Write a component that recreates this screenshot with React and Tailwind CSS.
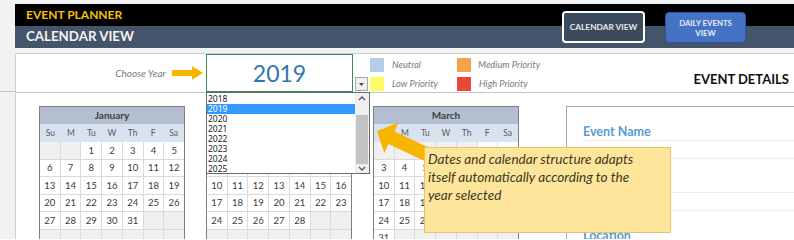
import React from "react";

const DAYS = ["Su", "M", "Tu", "W", "Th", "F", "Sa"];
const YEARS = [2018, 2019, 2020, 2021, 2022, 2023, 2024, 2025];

function MonthCalendar({ name, offset, days }) {
  const cells = Array.from({ length: 42 }, (_, i) => {
    const d = i - offset + 1;
    return d >= 1 && d <= days ? d : null;
  });
  return (
    <div className="w-[146px] shrink-0 border border-[#7f7f7f] bg-[#dadada]">
      <div className="h-[17px] bg-[#b3bfd0] flex items-center justify-center text-[10px] font-bold text-[#3f3f3f]">
        {name}
      </div>
      <div className="grid grid-cols-7 h-[18px] bg-[#d9e2ef] items-center text-center text-[8.5px] text-[#5a5a5a]">
        {DAYS.map(d => <span key={d}>{d}</span>)}
      </div>
      <div className="grid grid-cols-7 gap-px">
        {cells.map((d, i) => (
          <div key={i}
            className={`h-[16.5px] flex items-center justify-center text-[9.5px] leading-none text-[#3a3a3a] ${d ? "bg-white" : "bg-[#f0f0f0]"}`}>
            {d}
          </div>
        ))}
      </div>
    </div>
  );
}

function Chevron({ up }) {
  return (
    <svg width="8" height="6" viewBox="0 0 8 6">
      <path d={up ? "M1 5 L4 2 L7 5" : "M1 1 L4 4 L7 1"} fill="none" stroke="#555" strokeWidth="1.3" />
    </svg>
  );
}

export default function App() {
  return (
    <div className="relative w-[794px] h-[239px] overflow-hidden bg-[#f2f2f2] font-['Lato',sans-serif]">
      {/* Title bars */}
      <div className="pl-[15px] pt-[4px]">
        <div className="relative">
          <div className="h-[22px] bg-black flex items-center pl-[11px] text-[12px] font-bold text-[#f5c000]">
            EVENT PLANNER
          </div>
          <div className="h-[22px] bg-[#44546a] flex items-center pl-[11px] text-[13.3px] font-bold text-[#f4f4f4]">
            CALENDAR VIEW
          </div>

          {/* nav buttons */}
          <div className="absolute left-[547px] top-[7px] flex gap-[20px]">
            <div className="w-[83px] h-[32px] rounded-[4px] border-2 border-white bg-[#3c4a5e] flex items-center justify-center text-[8.3px] font-bold text-[#e8e8e8]">
              CALENDAR VIEW
            </div>
            <div className="mt-[1px] w-[81px] h-[31px] rounded-[4px] bg-[#4472c4] border border-[#2f5597] flex flex-col items-center justify-center text-[7.8px] font-bold leading-[10px] text-[#e6ecf7]">
              <span>DAILY EVENTS</span>
              <span>VIEW</span>
            </div>
          </div>
        </div>
      </div>

      <div className="mt-[5px] flex">
        {/* left gutter */}
        <div className="w-[15px] shrink-0">
          <div className="h-[39px] border-b border-[#c6c6c6]" />
        </div>

        {/* sheet */}
        <div className="flex-1 bg-white border-l border-t border-[#cfcfcf]">
          {/* year / legend row */}
          <div className="h-[39px] flex border-b border-[#c6c6c6]">
            <div className="w-[150px] flex items-center justify-end text-[10px] italic text-[#7a7a7a]">
              Choose Year
            </div>
            <svg className="ml-[6px] self-center" width="31" height="14" viewBox="0 0 31 14">
              <polygon points="0,4 20,4 20,0 31,7 20,14 20,10 0,10" fill="#f7b500" />
            </svg>
            <div className="ml-[3px] w-[147px] border border-[#3f8a50] flex items-center justify-center text-[23px] text-[#2e75b6]">
              2019
            </div>
            <div className="ml-[2px] mt-[23px] w-[13px] h-[14px] border border-[#a6a6a6] bg-[#f0f0f0] flex items-center justify-center">
              <svg width="5" height="3" viewBox="0 0 5 3"><polygon points="0,0 5,0 2.5,3" fill="#444" /></svg>
            </div>

            {/* legend */}
            <div className="ml-[2px] pt-[4px] flex flex-col gap-[5px] w-[87px]">
              <div className="flex items-center gap-[8px]">
                <div className="w-[14px] h-[14px] bg-[#b4cde8]" />
                <span className="text-[9.3px] italic text-[#7a7a7a]">Neutral</span>
              </div>
              <div className="flex items-center gap-[8px]">
                <div className="w-[14px] h-[14px] bg-[#fdfb6a]" />
                <span className="text-[9.3px] italic text-[#7a7a7a]">Low Priority</span>
              </div>
            </div>
            <div className="pt-[4px] flex flex-col gap-[5px]">
              <div className="flex items-center gap-[7px]">
                <div className="w-[14px] h-[14px] bg-[#f6a24c]" />
                <span className="text-[9.3px] italic text-[#7a7a7a]">Medium Priority</span>
              </div>
              <div className="flex items-center gap-[8px]">
                <div className="w-[14px] h-[14px] bg-[#e64a3b]" />
                <span className="text-[9.3px] italic text-[#7a7a7a]">High Priority</span>
              </div>
            </div>

            <div className="ml-auto pr-[5px] pb-[3px] self-end text-[13px] font-bold text-[#111]">
              EVENT DETAILS
            </div>
          </div>

          {/* calendars + event form */}
          <div className="pt-[13px] pl-[23px] flex">
            <MonthCalendar name="January" offset={2} days={31} />
            <div className="ml-[21px]"><MonthCalendar name="February" offset={5} days={28} /></div>
            <div className="ml-[21px]"><MonthCalendar name="March" offset={5} days={31} /></div>

            <div className="ml-[47px] flex-1 border-l border-t border-[#a6a6a6] pl-[16px]">
              <div className="h-[34px] flex items-end pb-[1px] border-b border-[#ececec] text-[12.5px] leading-[14px] font-bold text-[#5b9bd5]">
                Event Name
              </div>
              <div className="h-[18px] border-b border-[#ececec]" />
              <div className="h-[17px]" />
              <div className="h-[17px] border-b border-[#ececec]" />
              <div className="h-[18px] border-b border-[#ececec]" />
              <div className="h-[18px]" />
              <div className="text-[12.5px] leading-[14px] font-bold text-[#5b9bd5]">Location</div>
            </div>
          </div>
        </div>
      </div>

      {/* open year dropdown */}
      <div className="absolute left-[206px] top-[92px] w-[164px] h-[82px] border border-[#6a6a6a] bg-white flex">
        <div className="flex-1 pt-px">
          {YEARS.map(y => (
            <div key={y}
              className={`h-[10px] flex items-center pl-[1px] text-[8.5px] leading-[10px] font-['Noto_Sans',sans-serif] ${y === 2019 ? "bg-[#3399ff] text-white" : "text-[#222]"}`}>
              {y}
            </div>
          ))}
        </div>
        <div className="w-[14px] bg-[#f0f0f0] flex flex-col items-center">
          <div className="h-[10px] flex items-center"><Chevron up /></div>
          <div className="mt-[12px] w-[12px] h-[49px] bg-[#c3c3c3]" />
          <div className="h-[9px] flex items-center"><Chevron /></div>
        </div>
      </div>

      {/* pointer arrow */}
      <svg className="absolute left-[370px] top-[115px]" width="70" height="55" viewBox="0 0 70 55">
        <polygon points="7,16 28.7,7.4 24.5,16.5 60.7,33.4 54.7,46 18.5,29.1 14.3,38.2" fill="#f7b500" />
      </svg>

      {/* note */}
      <div className="absolute left-[424px] top-[147px] w-[247px] h-[86px] bg-[#fde59b] border border-[#e2c56b] pl-[3px] pt-[2px] text-[13.6px] leading-[18px] italic text-[#3d3720]">
        <div>Dates and calendar structure adapts</div>
        <div>itself automatically according to the</div>
        <div>year selected</div>
      </div>
    </div>
  );
}
